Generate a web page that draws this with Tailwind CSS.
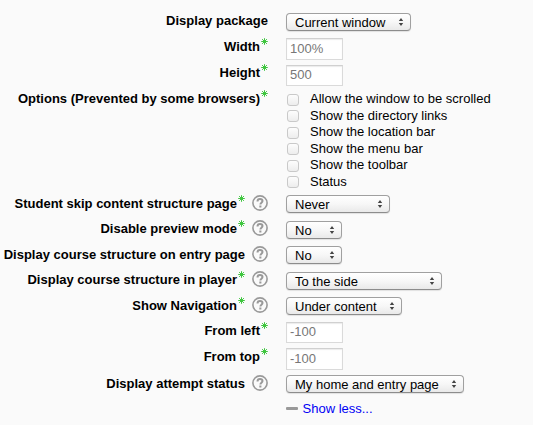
<!DOCTYPE html>
<html lang="en">
<head>
<meta charset="utf-8">
<title>Package settings</title>
<script src="https://cdn.jsdelivr.net/npm/@tailwindcss/browser@4"></script>
</head>
<body class="bg-[#fafafa] overflow-hidden">
<svg class="hidden">
  <symbol id="help" viewBox="0 0 16 16"><circle cx="8" cy="8" r="7.1" fill="none" stroke="#999" stroke-width="1.6"/><path d="M5.5 6.4C5.5 4.7 6.5 4 8 4s2.5.8 2.5 2.1c0 1.6-2.1 1.6-2.1 3.3" fill="none" stroke="#999" stroke-width="2"/><path d="M7.3 10.6h2.1v2h-2.1z" fill="#999"/></symbol>
  <symbol id="star" viewBox="0 0 7 7"><path d="M3.5.2v6.6M.2 3.5h6.6M1.1 1.1l4.8 4.8M5.9 1.1L1.1 5.9" stroke="#3fc63f" stroke-width="1" fill="none"/></symbol>
  <symbol id="arrows" viewBox="0 0 6 8"><path d="M3 0l2.2 3H.8zM3 8L.8 5h4.4z" fill="#444"/></symbol>
</svg>
<main id="form" class="w-[533px] h-[425px] pt-[9px] font-['Liberation_Sans',Arial,sans-serif] text-[13px] leading-4 text-black whitespace-nowrap"></main>
<script>
const star = '<svg class="w-[7px] h-[7px] ml-px -mt-px shrink-0"><use href="#star"/></svg>';
const help = '<svg class="w-4 h-4 ml-[7px] -mt-px shrink-0"><use href="#help"/></svg>';
const select = (text, w) => `<button class="flex items-center justify-between h-[18px] mt-1 pl-2 pr-[6px] rounded-[4px] border border-[#a0a0a0] border-b-[#8c8c8c] bg-linear-to-b from-white via-[#f7f7f7] to-[#e9e9e9] shadow-[0_1px_1px_#0000001a]" style="width:${w}px"><span class="pt-[2px]">${text}</span><svg class="w-[6px] h-2"><use href="#arrows"/></svg></button>`;
const input = (text, h, mt) => `<div class="w-[57px] border border-[#dadada] border-t-[#d0d0d0] shadow-[inset_0_1px_1px_#00000014] bg-white text-[#777] pl-[3px] flex items-center" style="height:${h}px;margin-top:${mt}px"><span class="pb-px">${text}</span></div>`;
const checks = ['Allow the window to be scrolled','Show the directory links','Show the location bar','Show the menu bar','Show the toolbar','Status']
  .map(t => `<label class="flex h-[16.55px]"><span class="w-3 h-3 ml-px mt-[2.5px] mr-[11px] shrink-0 rounded-[3px] border border-[#c9c9c9] bg-linear-to-b from-[#fdfdfd] to-[#ededed]"></span><span>${t}</span></label>`).join('');
// label, required, help icon, row height, label offset, control
const rows = [
 ['Display package',0,0,26,4,select('Current window',125)],
 ['Width',1,0,26,4,input('100%',22,3)],
 ['Height',1,0,27,4,input('500',21,4)],
 ['Options (Prevented by some browsers)',1,0,103,3,`<div class="pt-[3px]">${checks}</div>`],
 ['Student skip content structure page',1,1,26,5,select('Never',104)],
 ['Disable preview mode',1,1,25,4,select('No',56)],
 ['Display course structure on entry page',0,1,26,5,select('No',56)],
 ['Display course structure in player',1,1,25,4,select('To the side',156)],
 ['Show Navigation',1,1,26,5,select('Under content',116)],
 ['From left',1,0,26,4,input('-100',21,3)],
 ['From top',1,0,26,4,input('-100',22,3)],
 ['Display attempt status',0,1,26,5,select('My home and entry page',178)],
];
document.getElementById('form').innerHTML = rows.map(([t,s,h,ht,mt,c]) =>
 `<div class="grid grid-cols-[268px_auto] gap-[18px] justify-start items-start" style="height:${ht}px"><div class="flex justify-end items-start font-bold" style="margin-top:${mt}px"><span>${t}</span>${s?star:''}${h?help:''}</div>${c}</div>`).join('')
 + '<div class="flex items-center ml-[286px] h-[22px] text-[#0000f5]"><span class="w-3 h-[3px] rounded-[1px] bg-[#999] mr-[4.5px]"></span><a class="pt-px">Show less...</a></div>';
</script>
</body>
</html>
